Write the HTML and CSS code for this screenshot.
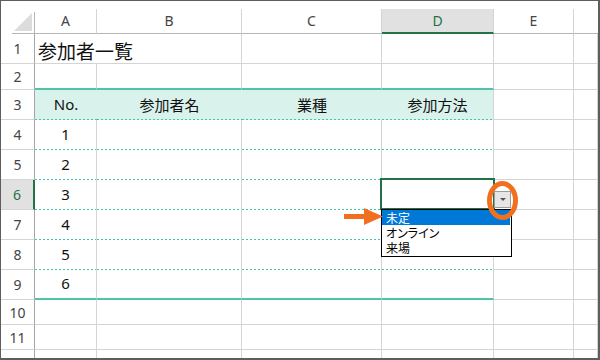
FILE: index.html
```html
<!DOCTYPE html>
<html lang="ja">
<head>
<meta charset="utf-8">
<link rel="stylesheet" href="styles.css">
</head>
<body>
<div class="frame">
  <div class="sheet">
    <div class="corner"><span class="tri"></span></div>
    <div class="ch">A</div>
    <div class="ch">B</div>
    <div class="ch">C</div>
    <div class="ch ch-sel">D</div>
    <div class="ch">E</div>
    <div class="ch ch-end"></div>

    <div class="rh">1</div>
    <div class="c c-title"><span class="title">参加者一覧</span></div>
    <div class="c"></div>
    <div class="c"></div>
    <div class="c"></div>
    <div class="c"></div>
    <div class="c"></div>

    <div class="rh">2</div>
    <div class="c top2"></div>
    <div class="c top2"></div>
    <div class="c top2"></div>
    <div class="c top2"></div>
    <div class="c"></div>
    <div class="c"></div>

    <div class="rh">3</div>
    <div class="band">No.</div>
    <div class="band">参加者名</div>
    <div class="band">業種</div>
    <div class="band band-end">参加方法</div>
    <div class="c"></div>
    <div class="c"></div>

    <div class="rh">4</div>
    <div class="t">1</div>
    <div class="t"></div>
    <div class="t"></div>
    <div class="t"></div>
    <div class="c"></div>
    <div class="c"></div>

    <div class="rh">5</div>
    <div class="t">2</div>
    <div class="t"></div>
    <div class="t"></div>
    <div class="t"></div>
    <div class="c"></div>
    <div class="c"></div>

    <div class="rh rh-sel">6</div>
    <div class="t">3</div>
    <div class="t"></div>
    <div class="t"></div>
    <div class="t"></div>
    <div class="c"></div>
    <div class="c"></div>

    <div class="rh">7</div>
    <div class="t">4</div>
    <div class="t"></div>
    <div class="t"></div>
    <div class="t"></div>
    <div class="c"></div>
    <div class="c"></div>

    <div class="rh">8</div>
    <div class="t">5</div>
    <div class="t"></div>
    <div class="t"></div>
    <div class="t"></div>
    <div class="c"></div>
    <div class="c"></div>

    <div class="rh">9</div>
    <div class="t last">6</div>
    <div class="t last"></div>
    <div class="t last"></div>
    <div class="t last"></div>
    <div class="c"></div>
    <div class="c"></div>

    <div class="rh">10</div>
    <div class="c"></div><div class="c"></div><div class="c"></div><div class="c"></div><div class="c"></div><div class="c"></div>

    <div class="rh">11</div>
    <div class="c"></div><div class="c"></div><div class="c"></div><div class="c"></div><div class="c"></div><div class="c"></div>

    <div class="rh">12</div>
    <div class="c"></div><div class="c"></div><div class="c"></div><div class="c"></div><div class="c"></div><div class="c"></div>

    <div class="selbox"></div>
    <div class="ddbtn"><span class="ddtri"></span></div>
    <ul class="ddlist">
      <li class="dditem dditem-on">未定</li>
      <li class="dditem">オンライン</li>
      <li class="dditem">来場</li>
    </ul>
    <svg class="marks" width="598" height="357" viewBox="0 0 598 357">
      <ellipse cx="501.5" cy="199.5" rx="13" ry="17" fill="none" stroke="#f07020" stroke-width="5"/>
      <rect x="343" y="213" width="22" height="5" fill="#f07020"/>
      <polygon points="363,207 382,215.5 363,224" fill="#f07020"/>
    </svg>
  </div>
</div>
</body>
</html>
```

FILE: styles.css
```css
* { box-sizing: border-box; }
html, body { margin: 0; padding: 0; background: #fff; }
.frame {
  width: 600px;
  height: 360px;
  border-style: solid;
  border-color: #5e5e5e;
  border-width: 1px 2px 2px 1px;
  overflow: hidden;
  background: #fff;
}
.sheet {
  position: relative;
  display: grid;
  grid-template-columns: 34px 62px 145px 140px 112px 80px 1fr;
  grid-template-rows: 33px 30px 26px 30px 30px 30px 30px 30px 30px 30px 25px 25px 25px;
  font-family: "Noto Sans", "Noto Sans CJK JP", sans-serif;
  color: #111;
}
.corner {
  position: relative;
  border-right: 1px solid #b5b5b5;
  border-bottom: 1px solid #b5b5b5;
  margin-top: 11px;
  margin-left: 11px;
}
.tri {
  position: absolute;
  right: 2px;
  bottom: 2px;
  width: 0;
  height: 0;
  border-style: solid;
  border-width: 0 0 18px 18px;
  border-color: transparent transparent #dcdcdc transparent;
}
.ch {
  margin-top: 8px;
  border-right: 1px solid #d4d4d4;
  border-bottom: 1px solid #b5b5b5;
  display: flex;
  align-items: center;
  justify-content: center;
  font-size: 14px;
  color: #444;
  padding-bottom: 1px;
}
.ch-sel {
  background: #e1e1e1;
  color: #217346;
  border-bottom: 2px solid #217346;
  padding-bottom: 0;
}
.ch-end { border-right: none; }
.rh {
  border-right: 1px solid #a6a6a6;
  border-bottom: 1px solid #d4d4d4;
  display: flex;
  align-items: center;
  justify-content: center;
  font-size: 14px;
  color: #444;
}
.rh-sel {
  background: #e1e1e1;
  color: #217346;
  border-right: 2px solid #217346;
}
.c {
  border-right: 1px solid #d4d4d4;
  border-bottom: 1px solid #d4d4d4;
}
.c-title {
  border-right: none;
  position: relative;
}
.title {
  position: absolute;
  left: 3px;
  top: 3px;
  font-size: 19px;
  white-space: nowrap;
  font-family: "Noto Sans CJK JP", sans-serif;
  color: #111;
}
.top2 { border-bottom: 2px solid #4fc4a9; }
.band {
  background-color: #daf2ec;
  background-image: repeating-linear-gradient(90deg, #45c6a6 0px, #45c6a6 2px, transparent 2px, transparent 4px);
  background-size: 100% 1px;
  background-position: left bottom;
  background-repeat: no-repeat;
  display: flex;
  align-items: center;
  justify-content: center;
  font-size: 15px;
  padding-bottom: 2px;
}
.band-end { border-right: 1px solid #d4d4d4; }
.t {
  border-right: 1px solid #d4d4d4;
  background-color: #fff;
  background-image: repeating-linear-gradient(90deg, #45c6a6 0px, #45c6a6 2px, transparent 2px, transparent 4px);
  background-size: 100% 1px;
  background-position: left bottom;
  background-repeat: no-repeat;
  display: flex;
  align-items: center;
  justify-content: center;
  font-size: 15px;
  padding-bottom: 3px;
}
.last {
  background-image: none;
  border-bottom: 2px solid #4fc4a9;
  padding-bottom: 2px;
}
.selbox {
  position: absolute;
  left: 379px;
  top: 177px;
  width: 115px;
  height: 32px;
  border: 2px solid #217346;
}
.ddbtn {
  position: absolute;
  left: 493px;
  top: 190px;
  width: 17px;
  height: 17px;
  background: #e6e6e6;
  border: 1px solid #9c9c9c;
}
.ddtri {
  position: absolute;
  left: 5px;
  top: 6px;
  width: 0;
  height: 0;
  border-style: solid;
  border-width: 3px 3px 0 3px;
  border-color: #555 transparent transparent transparent;
}
.ddlist {
  position: absolute;
  left: 380px;
  top: 208px;
  width: 131px;
  height: 48px;
  margin: 0;
  padding: 0;
  list-style: none;
  background: #fff;
  border: 1px solid #000;
  font-family: "Noto Sans CJK JP", sans-serif;
  font-feature-settings: "palt";
  font-size: 12px;
}
.dditem {
  height: 15px;
  line-height: 15px;
  padding-left: 4px;
  color: #000;
}
.dditem-on {
  background: #0078d7;
  color: #fff;
  margin-right: 1px;
}
.marks {
  position: absolute;
  left: 0;
  top: 0;
  pointer-events: none;
}
```
